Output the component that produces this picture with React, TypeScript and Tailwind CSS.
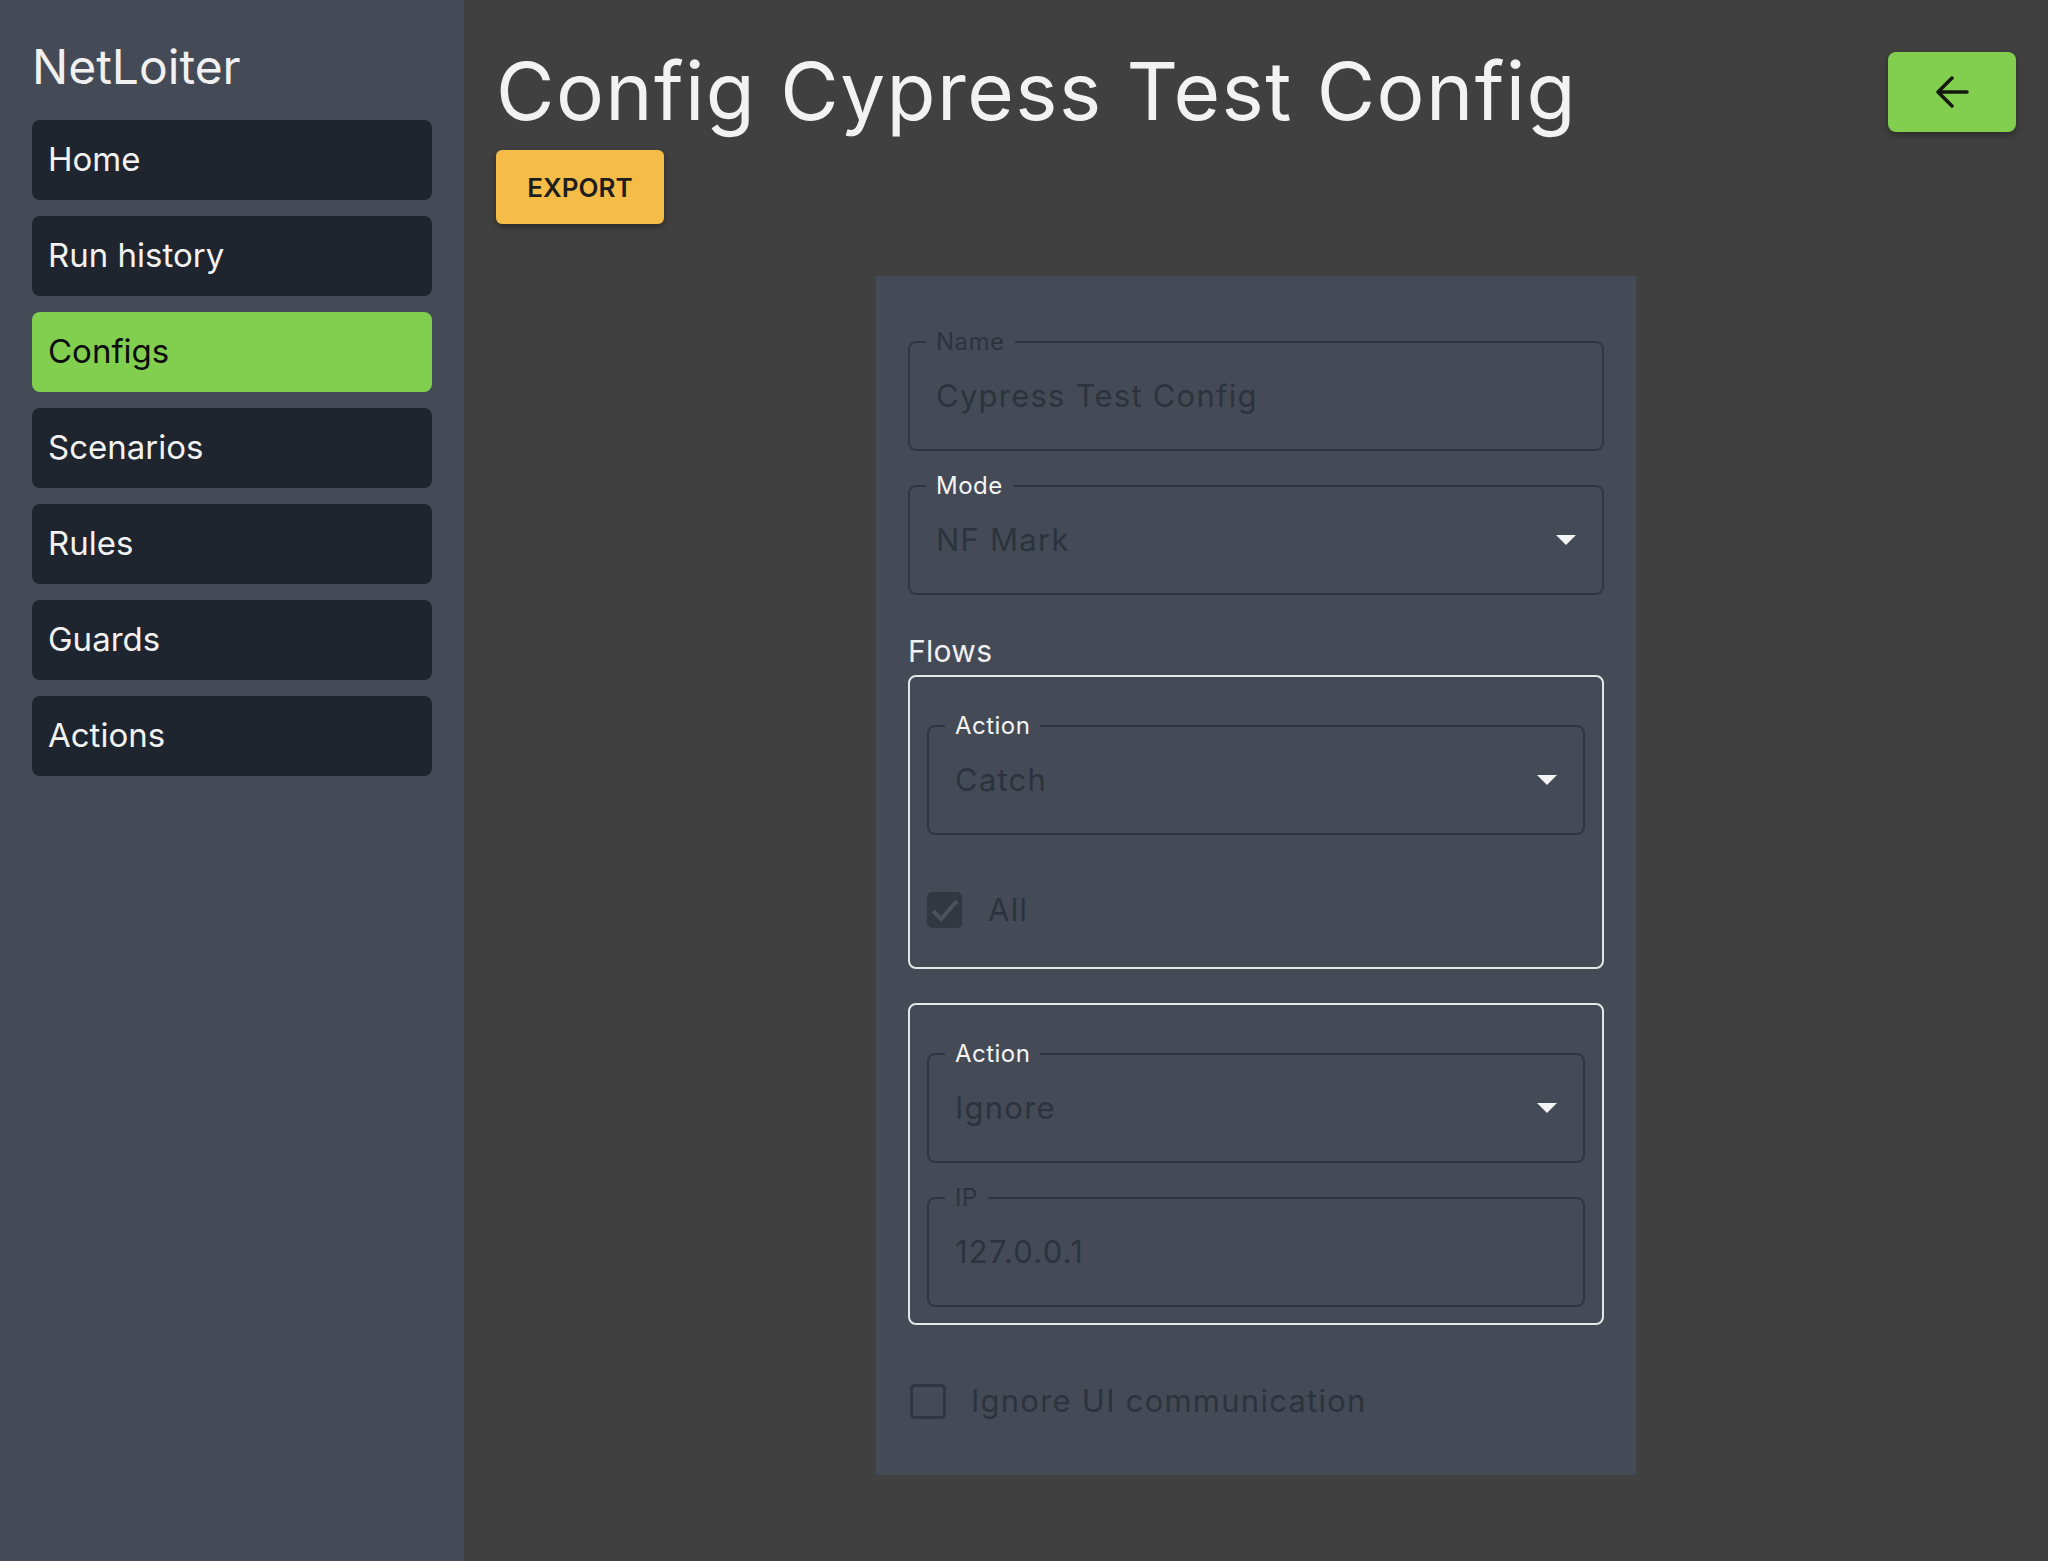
import React from "react";

const navItems = ["Home", "Run history", "Configs", "Scenarios", "Rules", "Guards", "Actions"];

function Field({
  label,
  value,
  activeLabel = false,
  select = false,
}: {
  label: string;
  value: string;
  activeLabel?: boolean;
  select?: boolean;
}) {
  return (
    <div className="relative h-[110px] rounded-[8px] border-2 border-[#303640] pl-[26px] pr-[26px] flex items-center justify-between">
      {/* floating label sitting on the border */}
      <span
        className={`absolute -top-[15px] left-[16px] px-[10px] bg-[#444b57] text-[24px] leading-[28px] tracking-[0.02em] ${
          activeLabel ? "text-[#f4f4f4]" : "text-[#2d333c]"
        }`}
      >
        {label}
      </span>
      <span className="text-[31px] leading-[36px] tracking-[0.04em] text-[#2d333c]">{value}</span>
      {select && (
        <svg width="20" height="10" viewBox="0 0 20 10" className="shrink-0">
          <path d="M0 0 H20 L10 10 Z" fill="#f4f4f4" />
        </svg>
      )}
    </div>
  );
}

function CheckedBox() {
  return (
    <div className="w-[35px] h-[36px] rounded-[5px] bg-[#323842] flex items-center justify-center">
      <svg width="35" height="36" viewBox="0 0 35 36">
        <path d="M6 19 L14 27 L30 9" fill="none" stroke="#4b525d" strokeWidth="4" />
      </svg>
    </div>
  );
}

function EmptyBox() {
  return <div className="w-[36px] h-[35px] rounded-[5px] border-[3px] border-[#30363f]" />;
}

export default function App() {
  return (
    <div className="flex min-h-screen bg-[#404040] font-['Inter','Noto_Sans',sans-serif]">
      {/* Sidebar */}
      <aside className="w-[464px] shrink-0 bg-[#444b57] px-8 pt-[38px]">
        <h1 className="text-[48px] leading-[58px] text-[#f0f0f0] mb-[24px]">NetLoiter</h1>
        <nav className="flex flex-col gap-4">
          {navItems.map((item) => (
            <div
              key={item}
              className={`h-[80px] rounded-[8px] pl-4 flex items-center text-[33px] ${
                item === "Configs" ? "bg-[#82cf50] text-[#0d0d0d]" : "bg-[#1f252e] text-[#f2f2f2]"
              }`}
            >
              {item}
            </div>
          ))}
        </nav>
      </aside>

      {/* Main */}
      <main className="flex-1 px-8">
        <div className="flex justify-between items-start">
          <div>
            <h2 className="mt-[44px] text-[80px] leading-[94px] tracking-[0.018em] text-[#f2f2f2]">
              Config Cypress Test Config
            </h2>
            <button className="mt-[12px] h-[74px] w-[168px] rounded-[6px] bg-[#f5bd47] text-[26px] font-semibold text-[#1e1e1e] shadow-[0_3px_6px_rgba(0,0,0,0.35)]">
              EXPORT
            </button>
          </div>
          <button className="mt-[52px] w-[128px] h-[80px] rounded-[8px] bg-[#82cf50] flex items-center justify-center shadow-[0_3px_6px_rgba(0,0,0,0.35)]">
            <svg width="34" height="32" viewBox="0 0 34 32">
              <path
                d="M32 16 H3 M17 2 L3 16 L17 30"
                fill="none"
                stroke="#141a10"
                strokeWidth="3.5"
                strokeLinecap="round"
                strokeLinejoin="round"
              />
            </svg>
          </button>
        </div>

        {/* Form panel */}
        <div className="mt-[52px] mx-auto w-[760px] bg-[#444b57] px-8 pt-[65px] pb-[56px]">
          <Field label="Name" value="Cypress Test Config" />
          <div className="mt-[34px]">
            <Field label="Mode" value="NF Mark" activeLabel select />
          </div>

          <h3 className="mt-[38px] mb-[6px] text-[30px] leading-[36px] tracking-[0.01em] text-[#f0f0f0]">Flows</h3>

          <div className="rounded-[8px] border-2 border-[#e6e6e6] pt-[48px] px-[17px] pb-[16px]">
            <Field label="Action" value="Catch" activeLabel select />
            <div className="mt-[57px] mb-[23px] h-[36px] flex items-center gap-[26px]">
              <CheckedBox />
              <span className="text-[31px] leading-[36px] tracking-[0.04em] text-[#2d333c]">All</span>
            </div>
          </div>

          <div className="mt-[34px] rounded-[8px] border-2 border-[#e6e6e6] pt-[48px] px-[17px] pb-[16px]">
            <Field label="Action" value="Ignore" activeLabel select />
            <div className="mt-[34px]">
              <Field label="IP" value="127.0.0.1" />
            </div>
          </div>

          <div className="mt-[58px] h-[36px] flex items-center gap-[25px] pl-[2px]">
            <EmptyBox />
            <span className="text-[31px] leading-[36px] tracking-[0.04em] text-[#2d333c]">
              Ignore UI communication
            </span>
          </div>
        </div>
      </main>
    </div>
  );
}
